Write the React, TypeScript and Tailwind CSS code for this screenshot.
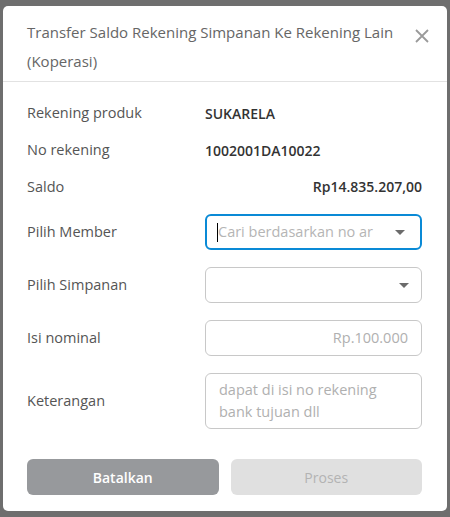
import React from "react";

const font = { fontFamily: '"Open Sans", "Noto Sans", sans-serif' };

function Caret() {
  return (
    <svg width="12" height="7" viewBox="0 0 12 7" className="shrink-0">
      <path d="M1 1 L11 1 L6 6 Z" fill="#6b6b6b" />
    </svg>
  );
}

function Row({ label, children, h }: { label: string; children: React.ReactNode; h: string }) {
  return (
    <div className={`flex items-center ${h}`}>
      <div className="w-[178px] shrink-0 text-[14.5px] text-[#555]">{label}</div>
      <div className="flex-1">{children}</div>
    </div>
  );
}

export default function App() {
  return (
    <div className="w-[450px] h-[517px] bg-[#6e6e6e] pl-[3px] pt-[6px] overflow-hidden" style={font}>
      <div className="w-[444px] h-[505px] bg-white rounded-[5px] flex flex-col">
        <div className="flex items-start justify-between pl-[24px] pr-[18px] pt-[12px] pb-[5px] border-b border-[#e2e2e2]">
          <div className="text-[15px] leading-[29px] text-[#666] w-[370px]">
            Transfer Saldo Rekening Simpanan Ke Rekening Lain (Koperasi)
          </div>
          <svg width="14" height="14" viewBox="0 0 14 14" className="mt-[11px]">
            <path d="M1 1 L13 13 M13 1 L1 13" stroke="#9a9a9a" strokeWidth="1.8" />
          </svg>
        </div>
        <div className="flex flex-col pl-[24px] pr-[25px] pt-[12px] pb-[16px] flex-1">
          <Row label="Rekening produk" h="h-[37px]">
            <span className="text-[14px] font-semibold text-[#333]">SUKARELA</span>
          </Row>
          <Row label="No rekening" h="h-[37px]">
            <span className="text-[14px] font-semibold text-[#333]">1002001DA10022</span>
          </Row>
          <Row label="Saldo" h="h-[37px]">
            <div className="text-right text-[14px] font-semibold text-[#333]">Rp14.835.207,00</div>
          </Row>
          <div className="mt-[9px]">
            <Row label="Pilih Member" h="h-[36px]">
              <div className="h-[36px] border-2 border-[#0a8ad6] rounded-[6px] flex items-center pl-[10px] pr-[14px]">
                <span className="w-px h-[19px] bg-black shrink-0" />
                <span className="flex-1 text-[14.5px] text-[#b5b5b5] whitespace-nowrap overflow-hidden">Cari berdasarkan no ar</span>
                <Caret />
              </div>
            </Row>
          </div>
          <div className="mt-[17px]">
            <Row label="Pilih Simpanan" h="h-[36px]">
              <div className="h-[36px] border border-[#c8c8c8] rounded-[6px] flex items-center justify-end pr-[11px]">
                <Caret />
              </div>
            </Row>
          </div>
          <div className="mt-[17px]">
            <Row label="Isi nominal" h="h-[36px]">
              <div className="h-[36px] border border-[#c8c8c8] rounded-[6px] flex items-center justify-end pr-[13px] text-[14.5px] text-[#b0b0b0]">
                Rp.100.000
              </div>
            </Row>
          </div>
          <div className="mt-[17px]">
            <Row label="Keterangan" h="h-[56px]">
              <div className="h-[56px] border border-[#c8c8c8] rounded-[6px] pl-[13px] pr-[30px] pt-[5px] text-[14.5px] leading-[22px] text-[#b0b0b0]">
                dapat di isi no rekening bank tujuan dll
              </div>
            </Row>
          </div>
          <div className="mt-auto grid grid-cols-2 gap-[12px]">
            <div className="h-[36px] rounded-[6px] bg-[#97999c] flex items-center justify-center text-[14px] font-semibold text-white">
              Batalkan
            </div>
            <div className="h-[36px] rounded-[6px] bg-[#e0e0e0] flex items-center justify-center text-[14px] text-[#b3b3b3]">
              Proses
            </div>
          </div>
        </div>
      </div>
    </div>
  );
}
